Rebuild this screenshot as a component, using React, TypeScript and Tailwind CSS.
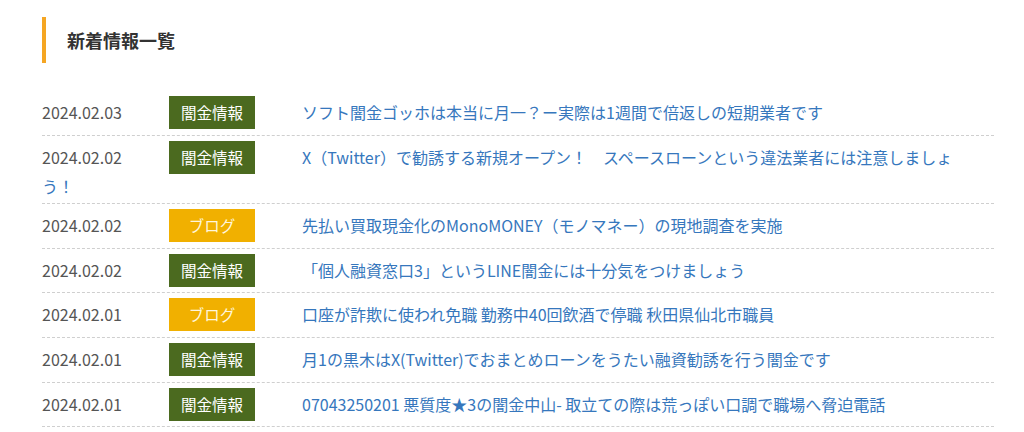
import React from "react";

type Item = { date: string; cat: "yami" | "blog"; title: string };

const items: Item[] = [
  { date: "2024.02.03", cat: "yami", title: "ソフト闇金ゴッホは本当に月一？ー実際は1週間で倍返しの短期業者です" },
  { date: "2024.02.02", cat: "yami", title: "X（Twitter）で勧誘する新規オープン！　スペースローンという違法業者には注意しましょう！" },
  { date: "2024.02.02", cat: "blog", title: "先払い買取現金化のMonoMONEY（モノマネー）の現地調査を実施" },
  { date: "2024.02.02", cat: "yami", title: "「個人融資窓口3」というLINE闇金には十分気をつけましょう" },
  { date: "2024.02.01", cat: "blog", title: "口座が詐欺に使われ免職 勤務中40回飲酒で停職 秋田県仙北市職員" },
  { date: "2024.02.01", cat: "yami", title: "月1の黒木はX(Twitter)でおまとめローンをうたい融資勧誘を行う闇金です" },
  { date: "2024.02.01", cat: "yami", title: "07043250201 悪質度★3の闇金中山- 取立ての際は荒っぽい口調で職場へ脅迫電話" },
];

export default function App() {
  return (
    <div
      className="w-[1024px] h-[432px] bg-white overflow-hidden"
      style={{ fontFamily: '"Noto Sans CJK JP", "Noto Sans", sans-serif' }}
    >
      <div className="pl-[42px] pt-[17px] w-[994px]">
        <div className="flex items-center h-[46px] border-l-4 border-[#f5a623] pl-[21px]">
          <h2 className="text-[18px] font-bold text-[#333333]">新着情報一覧</h2>
        </div>
        <ul className="mt-[28px]">
          {items.map((it, i) => (
            <li
              key={i}
              className="pt-[5px] pb-[5.6px] pr-[22px] border-b border-dashed border-[#cfcfcf] text-[16px] leading-[24px]"
            >
              <span className="inline-block w-[127px] text-[#555555]">{it.date}</span>
              <span
                className={
                  "inline-block w-[86px] h-[33px] leading-[33px] text-center text-[15.5px] mr-[47px] " +
                  (it.cat === "yami" ? "bg-[#4b6a1f] text-white" : "bg-[#f1b000] text-[#fff6dc]")
                }
              >
                {it.cat === "yami" ? "闇金情報" : "ブログ"}
              </span>
              <span className="text-[#3677bd]">{it.title}</span>
            </li>
          ))}
        </ul>
      </div>
    </div>
  );
}
